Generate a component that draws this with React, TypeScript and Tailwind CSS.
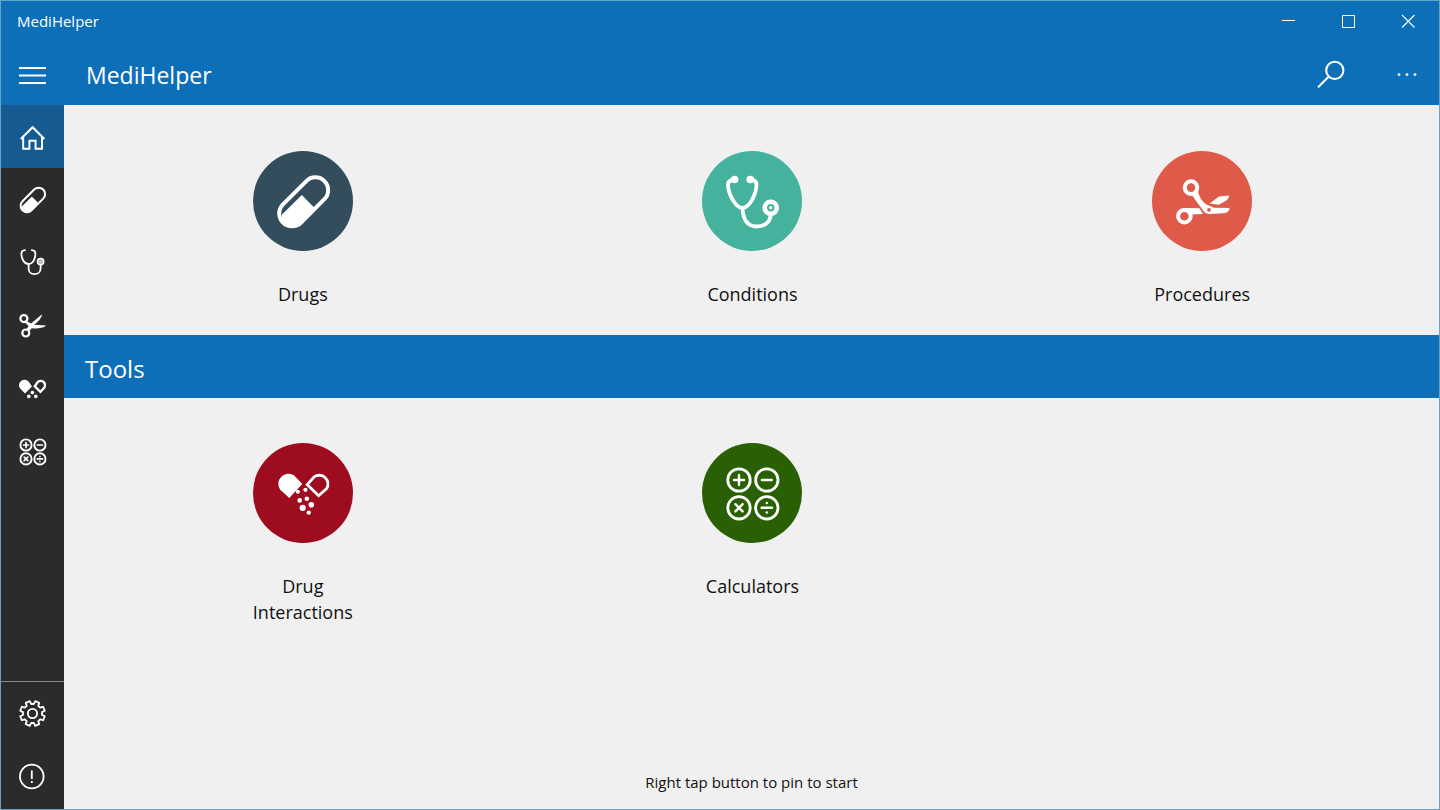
import type { ReactNode } from "react";

const FONT = "font-['Open_Sans','Noto_Sans',sans-serif]";

type GlyphProps = { className: string };

function PillGlyph({ className }: GlyphProps) {
  return (
    <svg viewBox="-1 -1 54 54" className={`overflow-visible ${className}`} fill="none" aria-hidden="true">
      <rect x="-2.6" y="14" width="58.6" height="25.6" rx="12.8" stroke="currentColor" strokeWidth="4" transform="rotate(-45 26.7 26.8)" />
      <path d="M24.8 20 37.6 33 24 47.4C14 54 2 48 5 39.6Z" fill="currentColor" />
    </svg>
  );
}

function StethoscopeGlyph({ className }: GlyphProps) {
  return (
    <svg viewBox="-1 -1 54 54" className={`overflow-visible ${className}`} fill="none" stroke="currentColor" strokeLinecap="round" aria-hidden="true">
      <path
        d="M8.3 4.5C4 5 2 6.5 2 9.5C2 18 9 33 16.5 33S30.5 18 30.5 9.5C30.5 6.5 28.5 5 24.3 4.5M16.5 33C17 44 21 51 30 51.5C38 51.5 44 48 44.7 40"
        strokeWidth="3.8"
        strokeLinejoin="round"
      />
      <g fill="currentColor" stroke="none">
        <circle cx="8.6" cy="4.5" r="3.8" />
        <circle cx="24.2" cy="4.5" r="3.8" />
        <circle cx="44.7" cy="32.8" r="1.7" />
      </g>
      <circle cx="44.7" cy="32.8" r="6" strokeWidth="4.6" />
    </svg>
  );
}

function SmallStethoscopeGlyph({ className }: GlyphProps) {
  return (
    <svg viewBox="0 0 27 27" className={className} fill="none" stroke="currentColor" strokeWidth="1.8" strokeLinecap="round" strokeLinejoin="round" aria-hidden="true">
      <path d="M6 1.2C3.4 1.4 2.4 2.4 2.4 5C2.4 10 5.4 15 9.6 15S16.4 10 16.4 5C16.4 2.4 15.4 1.4 12.8 1.2M9.6 15V19.4C9.6 23 12 25.2 15.4 25.2S21.6 23 21.6 19.4V16" />
      <circle cx="21.6" cy="12.6" r="3.2" fill="#bdbdbd" strokeWidth="1.4" />
    </svg>
  );
}

function ScissorsGlyph({ className }: GlyphProps) {
  return (
    <svg viewBox="-1 -1 54 54" className={`overflow-visible ${className}`} aria-hidden="true">
      <g fill="none" stroke="currentColor" strokeWidth="4">
        <circle cx="15" cy="12.6" r="6.3" />
        <circle cx="8.4" cy="41.2" r="6.3" />
      </g>
      <path
        fillRule="evenodd"
        fill="currentColor"
        d="M15 19.5 22 15.5C22.5 21 26 26.5 30.5 29.5L38 32.8 53.4 33C53.6 36 51 38 47.5 38.3L34 39C29 38.8 28 37 26 33.8L20 26C18.5 23.5 17 21 15 19.5ZM33 33A1.9 1.9 0 1 0 33 36.8A1.9 1.9 0 1 0 33 33Z"
      />
      <path fill="currentColor" d="M8.4 33 23.5 33.2 27 39 16 39.5ZM33.6 28.6 43 21.4 53 20.6C53 22.6 52 24.2 50.6 25.2L43 29.8Z" />
    </svg>
  );
}

function SmallScissorsGlyph({ className }: GlyphProps) {
  return (
    <svg viewBox="0 0 27 27" className={className} aria-hidden="true">
      <g fill="none" stroke="currentColor" strokeWidth="2.2">
        <circle cx="4.9" cy="6.6" r="3.5" />
        <circle cx="6.8" cy="21" r="3.5" />
      </g>
      <path fill="currentColor" d="M7 8.6 12 11.4 23.4 2C22 6.4 19.4 9.9 15 12.8L27 13.6C25 16 21 16.8 12.8 16.2L10 19.2 7.4 17.4 9.6 14 6 10.4Z" />
    </svg>
  );
}

function OpenPillGlyph({ className }: GlyphProps) {
  return (
    <svg viewBox="-1 -1 54 54" className={`overflow-visible ${className}`} fill="currentColor" aria-hidden="true">
      <path d="M25.3 17 17.2 8.5A10.2 10.2 0 0 0 3 22.6L12.3 31Z" />
      <path d="M30.2 17.6 37 10A8.7 8.7 0 0 1 49.4 21.9L41.6 28.7Z" fill="none" stroke="currentColor" strokeWidth="2.8" />
      <circle cx="28.4" cy="22.8" r="2.1" />
      <circle cx="20.9" cy="24.8" r="2" />
      <circle cx="22.7" cy="33.4" r="2.3" />
      <circle cx="29.8" cy="31.8" r="2.3" />
      <circle cx="34.3" cy="37.8" r="2.8" />
      <circle cx="25.7" cy="40.8" r="3.1" />
      <circle cx="31.7" cy="45.6" r="2.2" />
    </svg>
  );
}

function SmallOpenPillGlyph({ className }: GlyphProps) {
  return (
    <svg viewBox="0 0 27 27" className={className} fill="currentColor" aria-hidden="true">
      <path d="M13 11.6 9.8 6.8A5.4 5.4 0 0 0 1.2 13.6L6 18.6Z" />
      <path d="M15.8 11.4 18.4 7.4A4.3 4.3 0 0 1 25 13L21.4 16.8Z" fill="none" stroke="currentColor" strokeWidth="2.4" />
      <circle cx="13.4" cy="17.6" r="1.8" />
      <circle cx="9.8" cy="21.4" r="1.8" />
      <circle cx="16.8" cy="21.4" r="1.8" />
    </svg>
  );
}

function CalculatorGlyph({ className, bold = false }: GlyphProps & { bold?: boolean }) {
  return (
    <svg viewBox="-1 -1 54 54" className={`overflow-visible ${className}`} fill="none" stroke="currentColor" strokeWidth={bold ? 3.8 : 2.8} aria-hidden="true">
      <circle cx="13" cy="13" r="11.2" />
      <circle cx="40.8" cy="13" r="11.2" />
      <circle cx="13" cy="40.8" r="11.2" />
      <circle cx="40.8" cy="40.8" r="11.2" />
      <g strokeWidth={bold ? 3.4 : 2.4} strokeLinecap="round">
        <path d="M13 8v10M8 13h10M35.8 13h10M9.4 37.2l7.2 7.2M16.6 37.2l-7.2 7.2M35.6 40.8h10.4" />
        <path d="M40.8 36v.1M40.8 45.5v.1" />
      </g>
    </svg>
  );
}

function HomeGlyph({ className }: GlyphProps) {
  return (
    <svg viewBox="0 0 27 27" className={className} fill="none" stroke="currentColor" strokeWidth="2" aria-hidden="true">
      <path d="M1.8 16 13.6 4.2 25.4 16M4.2 13.6V25.8H10.4V17.8H16.6V25.8H23V13.6" />
    </svg>
  );
}

const gearPath = Array.from({ length: 8 }, (_, i) => {
  const middle = 22.5 + i * 45;
  return [
    [-14.5, 9.6],
    [-10, 12.6],
    [10, 12.6],
    [14.5, 9.6],
  ]
    .map(([offset, radius]) => {
      const angle = ((middle + offset) * Math.PI) / 180;
      return `${(13.5 + radius * Math.cos(angle)).toFixed(2)} ${(13.5 + radius * Math.sin(angle)).toFixed(2)}`;
    })
    .join("L");
}).join("L");

function GearGlyph({ className }: GlyphProps) {
  return (
    <svg viewBox="0 0 27 27" className={className} fill="none" stroke="currentColor" strokeWidth="1.8" strokeLinejoin="round" aria-hidden="true">
      <path d={`M${gearPath}Z`} />
      <circle cx="13.5" cy="13.5" r="4.6" />
    </svg>
  );
}

function AboutGlyph({ className }: GlyphProps) {
  return (
    <svg viewBox="0 0 27 27" className={className} fill="none" stroke="currentColor" strokeWidth="1.8" aria-hidden="true">
      <circle cx="12.8" cy="13.5" r="11.8" />
      <path d="M12.8 7.5V16.1M12.8 17.9V19.9" />
    </svg>
  );
}

function NavButton({ label, active = false, children }: { label: string; active?: boolean; children: ReactNode }) {
  return (
    <button
      type="button"
      aria-label={label}
      aria-current={active ? "page" : undefined}
      className={`flex h-[63px] w-full items-center justify-center text-white ${active ? "bg-[#155b92]" : "hover:bg-[#3a3a3a]"}`}
    >
      {children}
    </button>
  );
}

function Tile({ label, color, children }: { label: string; color: string; children: ReactNode }) {
  return (
    <button type="button" className="flex w-[120px] flex-col items-center gap-[30px] justify-self-center">
      <span className={`flex size-[100px] items-center justify-center rounded-full text-white ${color}`}>{children}</span>
      <span className="text-[18px] leading-[26px] text-[#111111]">{label}</span>
    </button>
  );
}

export default function App() {
  return (
    <div className={`flex min-h-screen flex-col border border-[#62a5c6] bg-[#f0f0f0] ${FONT}`}>
      <header className="bg-[#0d6fb8] text-white">
        <div className="flex h-10 items-center justify-between pr-px pl-4">
          <span className="text-[15px] leading-5">MediHelper</span>
          <div className="flex">
            <button type="button" aria-label="Minimize" className="flex h-10 w-[60px] items-center justify-center">
              <svg viewBox="0 0 14 14" className="size-[14px]" stroke="currentColor" aria-hidden="true">
                <path d="M1 6.5H14" />
              </svg>
            </button>
            <button type="button" aria-label="Maximize" className="flex h-10 w-[60px] items-center justify-center">
              <svg viewBox="0 0 14 14" className="size-[14px]" fill="none" stroke="currentColor" aria-hidden="true">
                <path d="M1.5 1.5H13.5V13.5H1.5Z" />
              </svg>
            </button>
            <button type="button" aria-label="Close" className="flex h-10 w-[60px] items-center justify-center">
              <svg viewBox="0 0 14 14" className="size-[14px]" stroke="currentColor" strokeWidth="1.1" aria-hidden="true">
                <path d="M1 1 13.5 13.5M13.5 1 1 13.5" />
              </svg>
            </button>
          </div>
        </div>
        <div className="flex h-16 items-center pt-0.5">
          <button type="button" aria-label="Menu" className="flex h-full w-[63px] items-center justify-center">
            <svg viewBox="0 0 27 20" className="h-5 w-[27px]" stroke="currentColor" strokeWidth="2" aria-hidden="true">
              <path d="M0 4H27M0 11.5H27M0 19H27" />
            </svg>
          </button>
          <h1 className="flex-1 pt-0.5 pl-[22px] text-[23px] leading-8">MediHelper</h1>
          <button type="button" aria-label="Search" className="flex h-full w-[88px] items-center justify-center">
            <svg viewBox="0 0 28 28" className="size-7" fill="none" stroke="currentColor" strokeWidth="2" strokeLinecap="round" aria-hidden="true">
              <circle cx="17.8" cy="10.4" r="8.6" />
              <path d="M11.6 16.8 1.6 26.8" />
            </svg>
          </button>
          <button type="button" aria-label="More" className="flex h-full w-16 items-center justify-center">
            <svg viewBox="0 0 20 4" className="h-1 w-5" fill="currentColor" aria-hidden="true">
              <circle cx="2" cy="2.6" r="1.4" />
              <circle cx="10" cy="2.6" r="1.4" />
              <circle cx="18" cy="2.6" r="1.4" />
            </svg>
          </button>
        </div>
      </header>

      <div className="flex flex-1">
        <nav className="flex w-[63px] flex-col justify-between bg-[#2b2b2b]" aria-label="Main">
          <div>
            <NavButton label="Home" active>
              <HomeGlyph className="size-[27px]" />
            </NavButton>
            <NavButton label="Drugs">
              <PillGlyph className="size-[27px]" />
            </NavButton>
            <NavButton label="Conditions">
              <SmallStethoscopeGlyph className="size-[27px]" />
            </NavButton>
            <NavButton label="Procedures">
              <SmallScissorsGlyph className="size-[27px]" />
            </NavButton>
            <NavButton label="Drug Interactions">
              <SmallOpenPillGlyph className="size-[27px]" />
            </NavButton>
            <NavButton label="Calculators">
              <CalculatorGlyph className="size-[27px]" bold />
            </NavButton>
          </div>
          <div className="border-t border-[#8a8a8a] pb-px">
            <NavButton label="Settings">
              <GearGlyph className="size-[27px]" />
            </NavButton>
            <NavButton label="About">
              <AboutGlyph className="size-[27px]" />
            </NavButton>
          </div>
        </nav>

        <main className="flex flex-1 flex-col">
          <section className="grid grid-cols-3 pt-[46px] pr-3 pb-7 pl-[14px]">
            <Tile label="Drugs" color="bg-[#344d5c]">
              <PillGlyph className="size-[54px]" />
            </Tile>
            <Tile label="Conditions" color="bg-[#45b29d]">
              <StethoscopeGlyph className="size-[54px]" />
            </Tile>
            <Tile label="Procedures" color="bg-[#df5a49]">
              <ScissorsGlyph className="size-[54px]" />
            </Tile>
          </section>
          <h2 className="bg-[#0d6fb8] pt-[18px] pb-[14px] pl-[21px] text-[24px] leading-[31px] text-white">Tools</h2>
          <section className="grid grid-cols-3 pt-[45px] pr-3 pb-7 pl-[14px]">
            <Tile label="Drug Interactions" color="bg-[#9e0c1f]">
              <OpenPillGlyph className="size-[54px]" />
            </Tile>
            <Tile label="Calculators" color="bg-[#2a6004]">
              <CalculatorGlyph className="size-[54px]" />
            </Tile>
          </section>
          <p className="mt-auto pb-[17px] text-center text-[15px] leading-5 text-[#111111]">Right tap button to pin to start</p>
        </main>
      </div>
    </div>
  );
}
